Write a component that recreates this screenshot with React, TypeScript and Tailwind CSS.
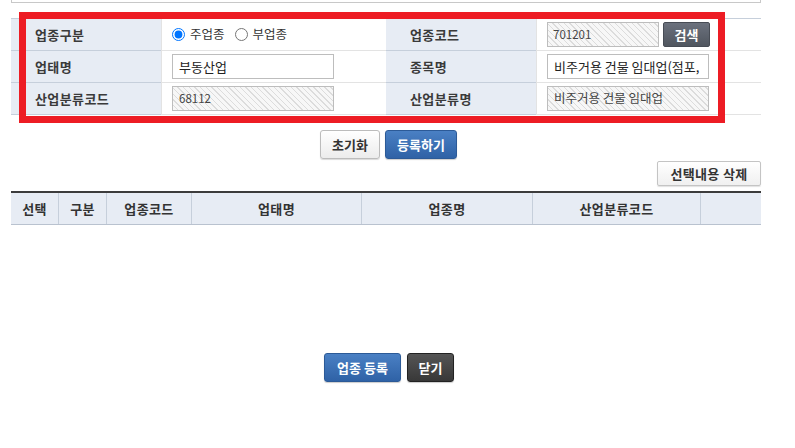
const font = { fontFamily: '"Noto Sans CJK KR", "Liberation Sans", sans-serif' }

const hatch =
  "bg-[image:repeating-linear-gradient(45deg,#f7f7f7_0px,#f7f7f7_3px,#dcdcdc_3px,#dcdcdc_4px)]"

const Label = ({ text }: { text: string }) => (
  <div className="flex items-center pl-[24px] bg-[#e7ecf4] border-b border-[#c6cfdb] text-[13px] tracking-[0.4px] font-bold text-[#3a3a3a]">
    {text}
  </div>
)

const Cell = ({ children }: { children: React.ReactNode }) => (
  <div className="flex items-center pl-[10px] bg-white border-b border-l border-[#e3e3e3]">
    {children}
  </div>
)

const headers = [
  { name: "선택", w: "w-[47px]" },
  { name: "구분", w: "w-[48px]" },
  { name: "업종코드", w: "w-[85px]" },
  { name: "업태명", w: "w-[170px]" },
  { name: "업종명", w: "w-[171px]" },
  { name: "산업분류코드", w: "w-[168px]" },
  { name: "", w: "flex-1" },
]

const App = () => {
  return (
    <main className="relative w-[795px] h-[448px] bg-white overflow-hidden" style={font}>
      <div className="ml-[11px] w-[750px]">
        <div className="h-[3px] border-x border-b border-[#c8c8c8]" />

        <section className="mt-[15px] border-t border-[#c6cfdb]">
          <div className="grid grid-cols-[150px_225px_150px_1fr] auto-rows-[32px]">
            <Label text="업종구분" />
            <Cell>
              <label className="flex items-center text-[12.5px] text-[#333]">
                <input type="radio" name="kind" defaultChecked className="m-0 w-[13px] h-[13px]" />
                <span className="ml-[5px]">주업종</span>
              </label>
              <label className="flex items-center ml-[10px] text-[12.5px] text-[#333]">
                <input type="radio" name="kind" className="m-0 w-[13px] h-[13px]" />
                <span className="ml-[5px]">부업종</span>
              </label>
            </Cell>
            <Label text="업종코드" />
            <Cell>
              <div className={`flex items-center w-[112px] h-[25px] border border-[#bdbdbd] pl-[5px] text-[11.5px] text-[#444] ${hatch}`}>
                701201
              </div>
              <button className="ml-[4px] w-[47px] h-[25px] rounded-[2px] bg-linear-to-b from-[#6b717d] to-[#50565f] border border-[#474c55] text-white text-[13px] font-bold">
                검색
              </button>
            </Cell>

            <Label text="업태명" />
            <Cell>
              <div className="flex items-center w-[162px] h-[25px] border border-[#bdbdbd] bg-white pl-[6px] text-[13px] text-[#222]">
                부동산업
              </div>
            </Cell>
            <Label text="종목명" />
            <Cell>
              <div className="flex items-center w-[162px] h-[25px] border border-[#bdbdbd] bg-white pl-[6px] text-[13px] text-[#222] whitespace-nowrap overflow-hidden">
                비주거용 건물 임대업(점포,
              </div>
            </Cell>

            <Label text="산업분류코드" />
            <Cell>
              <div className={`flex items-center w-[162px] h-[25px] border border-[#bdbdbd] pl-[6px] text-[11.5px] text-[#444] ${hatch}`}>
                68112
              </div>
            </Cell>
            <Label text="산업분류명" />
            <Cell>
              <div className={`flex items-center w-[162px] h-[25px] border border-[#bdbdbd] pl-[6px] text-[12.5px] text-[#444] ${hatch}`}>
                비주거용 건물 임대업
              </div>
            </Cell>
          </div>
        </section>

        <div className="mt-[15px] flex justify-center gap-[5px] pl-[5px]">
          <button className="w-[60px] h-[29px] rounded-[3px] border border-[#bcbcbc] bg-linear-to-b from-white to-[#ececec] shadow-[0_1px_1px_rgba(0,0,0,0.15)] text-[13px] font-bold text-[#333]">
            초기화
          </button>
          <button className="w-[72px] h-[29px] rounded-[3px] border border-[#2c5a97] bg-linear-to-b from-[#4a80c4] to-[#2f62a6] shadow-[0_1px_1px_rgba(0,0,0,0.2)] text-[13px] font-bold text-white">
            등록하기
          </button>
        </div>

        <div className="mt-[2px] flex justify-end">
          <button className="w-[104px] h-[25px] rounded-[2px] border border-[#c4c4c4] bg-linear-to-b from-white to-[#f0f0f0] shadow-[0_1px_1px_rgba(0,0,0,0.12)] text-[13px] tracking-[0.3px] font-bold text-[#333]">
            선택내용 삭제
          </button>
        </div>

        <div className="mt-[5px] flex border-t-2 border-b border-t-[#3c3c3c] border-b-[#b9c2cf] bg-[#e7ecf4] h-[34px]">
          {headers.map((h, i) => (
            <div
              key={i}
              className={`${h.w} flex items-center justify-center text-[13px] tracking-[0.4px] font-bold text-[#333] ${i > 0 ? "border-l border-[#c6cfdb]" : ""}`}
            >
              {h.name}
            </div>
          ))}
        </div>

        <div className="mt-[128px] flex justify-center gap-[6px] pl-[6px]">
          <button className="w-[77px] h-[29px] rounded-[3px] border border-[#2c5a97] bg-linear-to-b from-[#4a80c4] to-[#2f62a6] shadow-[0_1px_1px_rgba(0,0,0,0.2)] text-[13px] font-bold text-white">
            업종 등록
          </button>
          <button className="w-[47px] h-[29px] rounded-[3px] border border-[#222] bg-linear-to-b from-[#555] to-[#383838] shadow-[0_1px_1px_rgba(0,0,0,0.2)] text-[13px] font-bold text-white">
            닫기
          </button>
        </div>
      </div>

      <div className="absolute left-[19px] top-[12px] w-[706px] h-[111px] border-[7px] border-[#ed1c24] pointer-events-none" />
    </main>
  )
}

export default App
